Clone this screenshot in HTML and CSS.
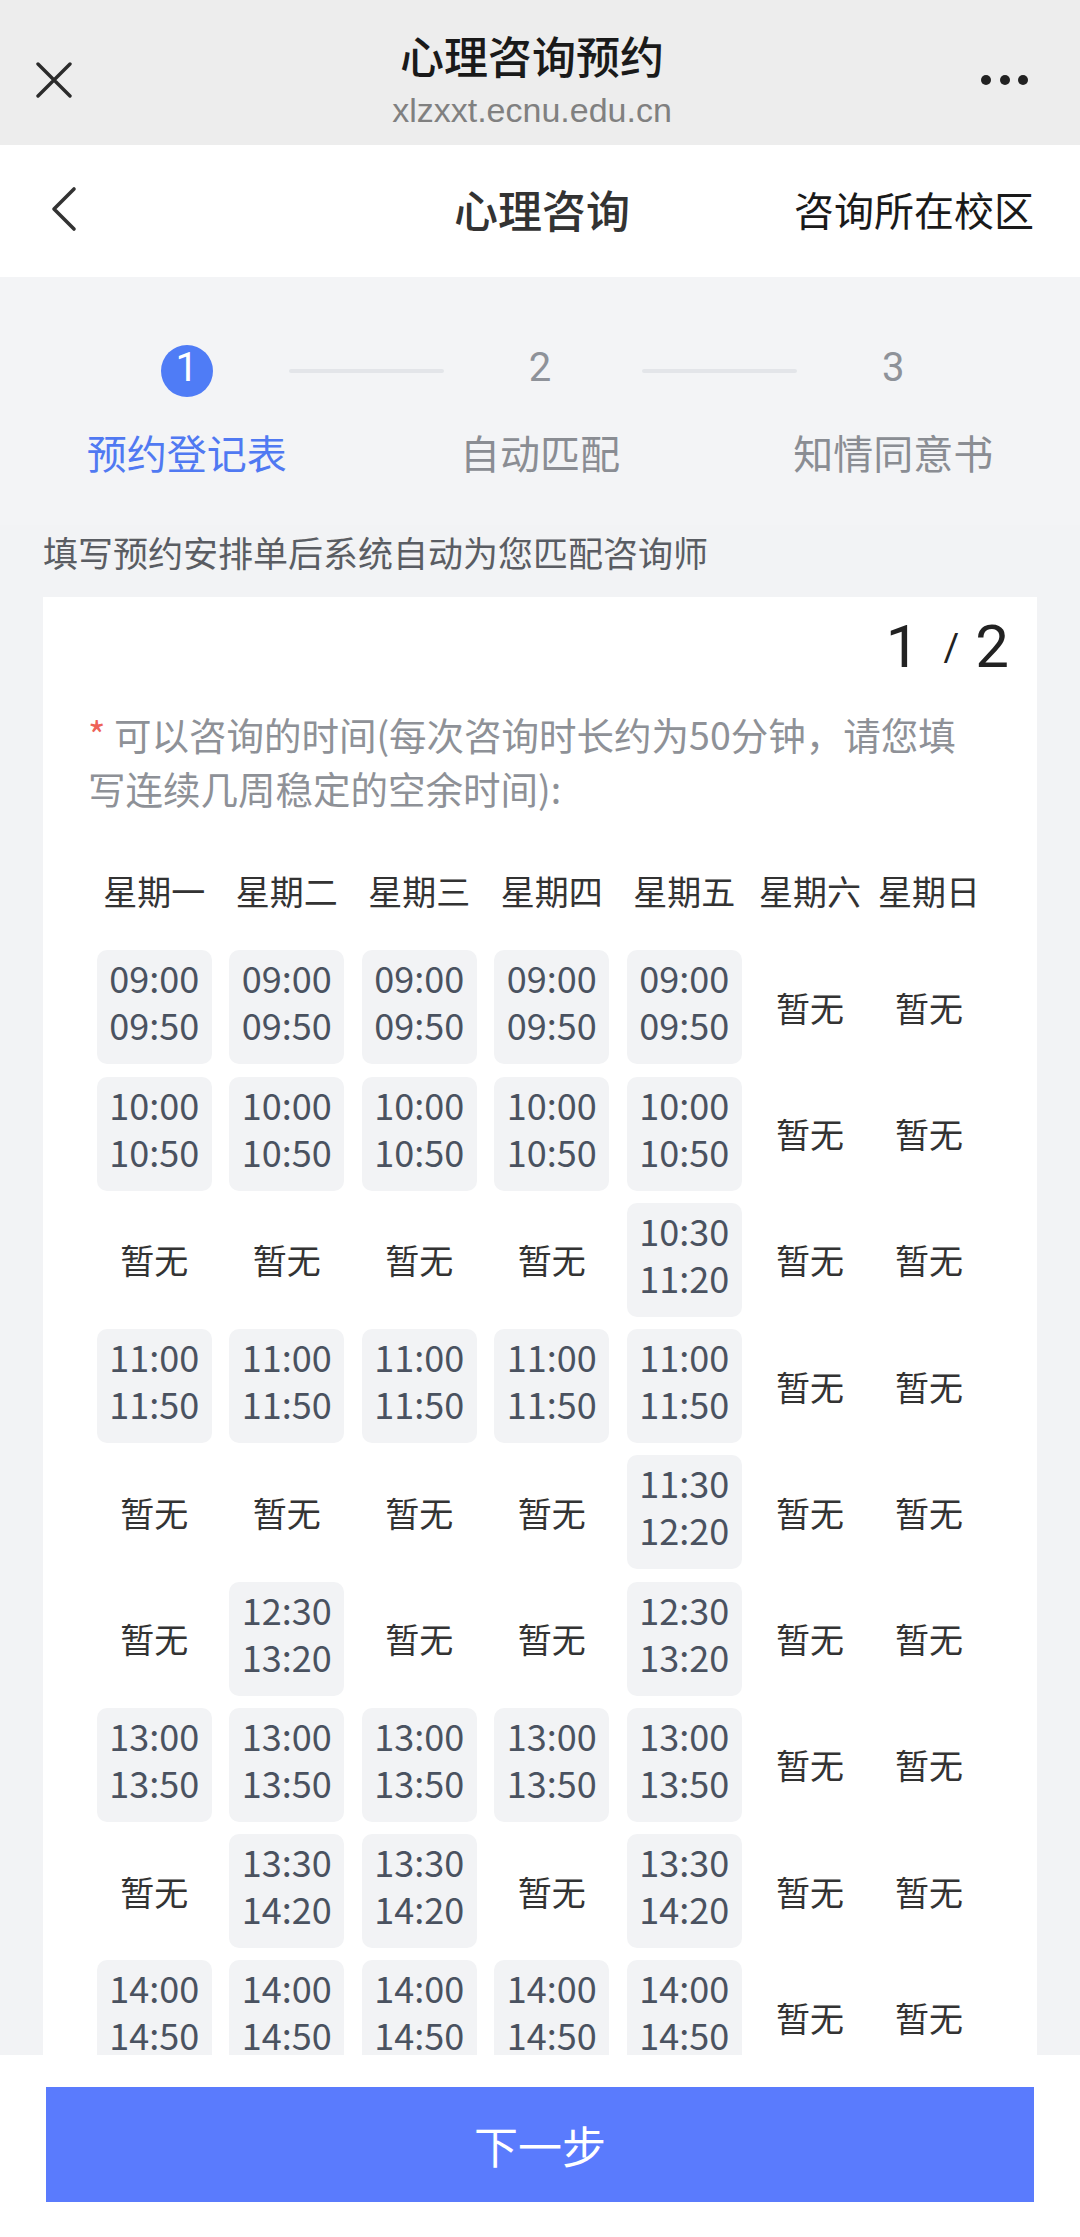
FILE: index.html
```html
<!DOCTYPE html>
<html lang="zh-CN">

<head>
    <meta charset="UTF-8">
    <meta name="viewport" content="width=device-width, initial-scale=1.0">
    <title>心理咨询预约</title>
    <link rel="stylesheet" href="styles.css">
</head>

<body>
    <div class="page">
        <header class="wx-bar">
            <span class="wx-close">
                <svg width="36" height="36" viewBox="0 0 36 36">
                    <path d="M2 2 L34 34 M34 2 L2 34" stroke="#2b2b2b" stroke-width="3.4" stroke-linecap="round" fill="none" />
                </svg>
            </span>
            <div class="wx-title">
                <div class="wx-name">心理咨询预约</div>
                <div class="wx-host">xlzxxt.ecnu.edu.cn</div>
            </div>
            <span class="wx-more"><i></i><i></i><i></i></span>
        </header>

        <nav class="nav">
            <span class="nav-back">
                <svg width="28" height="46" viewBox="0 0 28 46">
                    <path d="M24 3 L4 23 L24 43" stroke="#333" stroke-width="3.6" stroke-linecap="round" stroke-linejoin="round" fill="none" />
                </svg>
            </span>
            <h1 class="nav-title">心理咨询</h1>
            <span class="nav-link">咨询所在校区</span>
        </nav>

        <main class="main">
            <div class="steps">
                <div class="step active">
                    <span class="step-num">1</span>
                    <span class="step-label">预约登记表</span>
                </div>
                <div class="step">
                    <span class="step-num">2</span>
                    <span class="step-label">自动匹配</span>
                </div>
                <div class="step">
                    <span class="step-num">3</span>
                    <span class="step-label">知情同意书</span>
                </div>
            </div>

            <p class="hint">填写预约安排单后系统自动为您匹配咨询师</p>

            <section class="card">
                <div class="pager"><b>1</b><span>/</span><b>2</b></div>
                <p class="question"><span class="req">*</span> 可以咨询的时间(每次咨询时长约为50分钟，请您填写连续几周稳定的空余时间):</p>

                <div class="schedule">
                    <div class="day">星期一</div>
                    <div class="day">星期二</div>
                    <div class="day">星期三</div>
                    <div class="day">星期四</div>
                    <div class="day">星期五</div>
                    <div class="day">星期六</div>
                    <div class="day">星期日</div>

                    <div class="slot">09:00<br>09:50</div>
                    <div class="slot">09:00<br>09:50</div>
                    <div class="slot">09:00<br>09:50</div>
                    <div class="slot">09:00<br>09:50</div>
                    <div class="slot">09:00<br>09:50</div>
                    <div class="none">暂无</div>
                    <div class="none">暂无</div>

                    <div class="slot">10:00<br>10:50</div>
                    <div class="slot">10:00<br>10:50</div>
                    <div class="slot">10:00<br>10:50</div>
                    <div class="slot">10:00<br>10:50</div>
                    <div class="slot">10:00<br>10:50</div>
                    <div class="none">暂无</div>
                    <div class="none">暂无</div>

                    <div class="none">暂无</div>
                    <div class="none">暂无</div>
                    <div class="none">暂无</div>
                    <div class="none">暂无</div>
                    <div class="slot">10:30<br>11:20</div>
                    <div class="none">暂无</div>
                    <div class="none">暂无</div>

                    <div class="slot">11:00<br>11:50</div>
                    <div class="slot">11:00<br>11:50</div>
                    <div class="slot">11:00<br>11:50</div>
                    <div class="slot">11:00<br>11:50</div>
                    <div class="slot">11:00<br>11:50</div>
                    <div class="none">暂无</div>
                    <div class="none">暂无</div>

                    <div class="none">暂无</div>
                    <div class="none">暂无</div>
                    <div class="none">暂无</div>
                    <div class="none">暂无</div>
                    <div class="slot">11:30<br>12:20</div>
                    <div class="none">暂无</div>
                    <div class="none">暂无</div>

                    <div class="none">暂无</div>
                    <div class="slot">12:30<br>13:20</div>
                    <div class="none">暂无</div>
                    <div class="none">暂无</div>
                    <div class="slot">12:30<br>13:20</div>
                    <div class="none">暂无</div>
                    <div class="none">暂无</div>

                    <div class="slot">13:00<br>13:50</div>
                    <div class="slot">13:00<br>13:50</div>
                    <div class="slot">13:00<br>13:50</div>
                    <div class="slot">13:00<br>13:50</div>
                    <div class="slot">13:00<br>13:50</div>
                    <div class="none">暂无</div>
                    <div class="none">暂无</div>

                    <div class="none">暂无</div>
                    <div class="slot">13:30<br>14:20</div>
                    <div class="slot">13:30<br>14:20</div>
                    <div class="none">暂无</div>
                    <div class="slot">13:30<br>14:20</div>
                    <div class="none">暂无</div>
                    <div class="none">暂无</div>

                    <div class="slot">14:00<br>14:50</div>
                    <div class="slot">14:00<br>14:50</div>
                    <div class="slot">14:00<br>14:50</div>
                    <div class="slot">14:00<br>14:50</div>
                    <div class="slot">14:00<br>14:50</div>
                    <div class="none">暂无</div>
                    <div class="none">暂无</div>
                </div>
            </section>
        </main>

        <footer class="footer">
            <button class="next">下一步</button>
        </footer>
    </div>
</body>

</html>
```

FILE: styles.css
```css
* {
    box-sizing: border-box;
}

body {
    margin: 0;
    font-family: "Noto Sans CJK SC", sans-serif;
    color: #333;
}

.page {
    height: 100vh;
    display: flex;
    flex-direction: column;
    overflow: hidden;
}

/* wechat top bar */
.wx-bar {
    flex: none;
    height: 145px;
    display: grid;
    grid-template-columns: 1fr auto 1fr;
    padding: 0 52px 0 36px;
    background-color: #ededed;
}

.wx-close {
    align-self: start;
    margin-top: 62px;
    height: 36px;
}

.wx-close svg {
    display: block;
}

.wx-title {
    padding-top: 29px;
    text-align: center;
}

.wx-name {
    font-size: 44px;
    line-height: 52px;
    font-weight: 500;
    color: #1a1a1a;
}

.wx-host {
    font-family: "Liberation Sans", sans-serif;
    font-size: 34px;
    line-height: 58px;
    color: #808080;
}

.wx-more {
    justify-self: end;
    align-self: start;
    margin-top: 75px;
    display: flex;
    gap: 8.5px;
}

.wx-more i {
    width: 10px;
    height: 10px;
    border-radius: 50%;
    background-color: #222;
}

/* page nav */
.nav {
    flex: none;
    height: 132px;
    display: grid;
    grid-template-columns: 1fr auto 1fr;
    align-items: center;
    padding: 0 46px 4px 50px;
    background-color: #fff;
}

.nav-back svg {
    display: block;
}

.nav-title {
    margin: 0;
    font-size: 44px;
    font-weight: 500;
    color: #333;
}

.nav-link {
    justify-self: end;
    font-size: 40px;
    color: #1a1a1a;
}

.main {
    flex: 1;
    overflow: hidden;
    background-color: #f2f3f5;
}

/* steps */
.steps {
    display: grid;
    grid-template-columns: repeat(3, 1fr);
    padding: 68px 10px 45px;
    background-color: #f3f4f6;
}

.step {
    position: relative;
    display: flex;
    flex-direction: column;
    align-items: center;
}

.step:not(:last-child)::after {
    content: "";
    position: absolute;
    top: 24px;
    left: calc(50% + 102px);
    width: 155px;
    height: 4px;
    border-radius: 2px;
    background-color: #e3e5e9;
}

.step-num {
    width: 52px;
    height: 52px;
    border-radius: 50%;
    font-family: Roboto, sans-serif;
    font-size: 40px;
    line-height: 46px;
    text-align: center;
    color: #8e9299;
}

.step-label {
    margin-top: 27px;
    font-size: 40px;
    line-height: 56px;
    color: #8a8d93;
}

.step.active .step-num {
    background-color: #4f7cf6;
    color: #fff;
}

.step.active .step-label {
    color: #5079f2;
}

.hint {
    margin: 0;
    padding: 3px 43px 0;
    font-size: 35px;
    line-height: 48px;
    color: #5a5d63;
}

/* form card */
.card {
    margin: 21px 43px 0;
    padding: 15px 28px 40px;
    background-color: #fff;
}

.pager {
    height: 70px;
    text-align: right;
    font-family: Roboto, sans-serif;
    font-size: 60px;
    line-height: 70px;
    color: #222;
}

.pager b {
    font-weight: 400;
}

.pager span {
    display: inline-block;
    margin: 0 16px 0 24px;
    font-size: 38px;
    line-height: 1;
    vertical-align: 6px;
}

.question {
    margin: 25px 40px 0 17px;
    font-size: 37.5px;
    line-height: 54px;
    color: #8e9197;
}

.req {
    color: #ee6258;
}

.schedule {
    margin: 53px 17px 0;
    display: grid;
    grid-template-columns: repeat(5, 132.5px) repeat(2, 119px);
    grid-template-rows: 70px;
    grid-auto-rows: 114px;
    row-gap: 12.25px;
}

.day {
    padding-bottom: 24px;
    font-size: 34px;
    line-height: 46px;
    text-align: center;
    color: #333;
}

.slot {
    justify-self: center;
    width: 115px;
    height: 114px;
    padding-top: 4px;
    border-radius: 10px;
    background-color: #f2f3f5;
    font-size: 36px;
    line-height: 47px;
    text-align: center;
    color: #4a5260;
}

.none {
    display: flex;
    justify-content: center;
    align-items: center;
    font-size: 34px;
    color: #333;
}

/* bottom button */
.footer {
    flex: none;
    height: 182px;
    padding: 32px 46px 35px;
    background-color: #fff;
}

.next {
    display: block;
    width: 100%;
    height: 115px;
    border: none;
    background-color: #5a7bfd;
    font-family: "Noto Sans CJK SC", sans-serif;
    font-size: 44px;
    color: #fff;
    cursor: pointer;
}
```
